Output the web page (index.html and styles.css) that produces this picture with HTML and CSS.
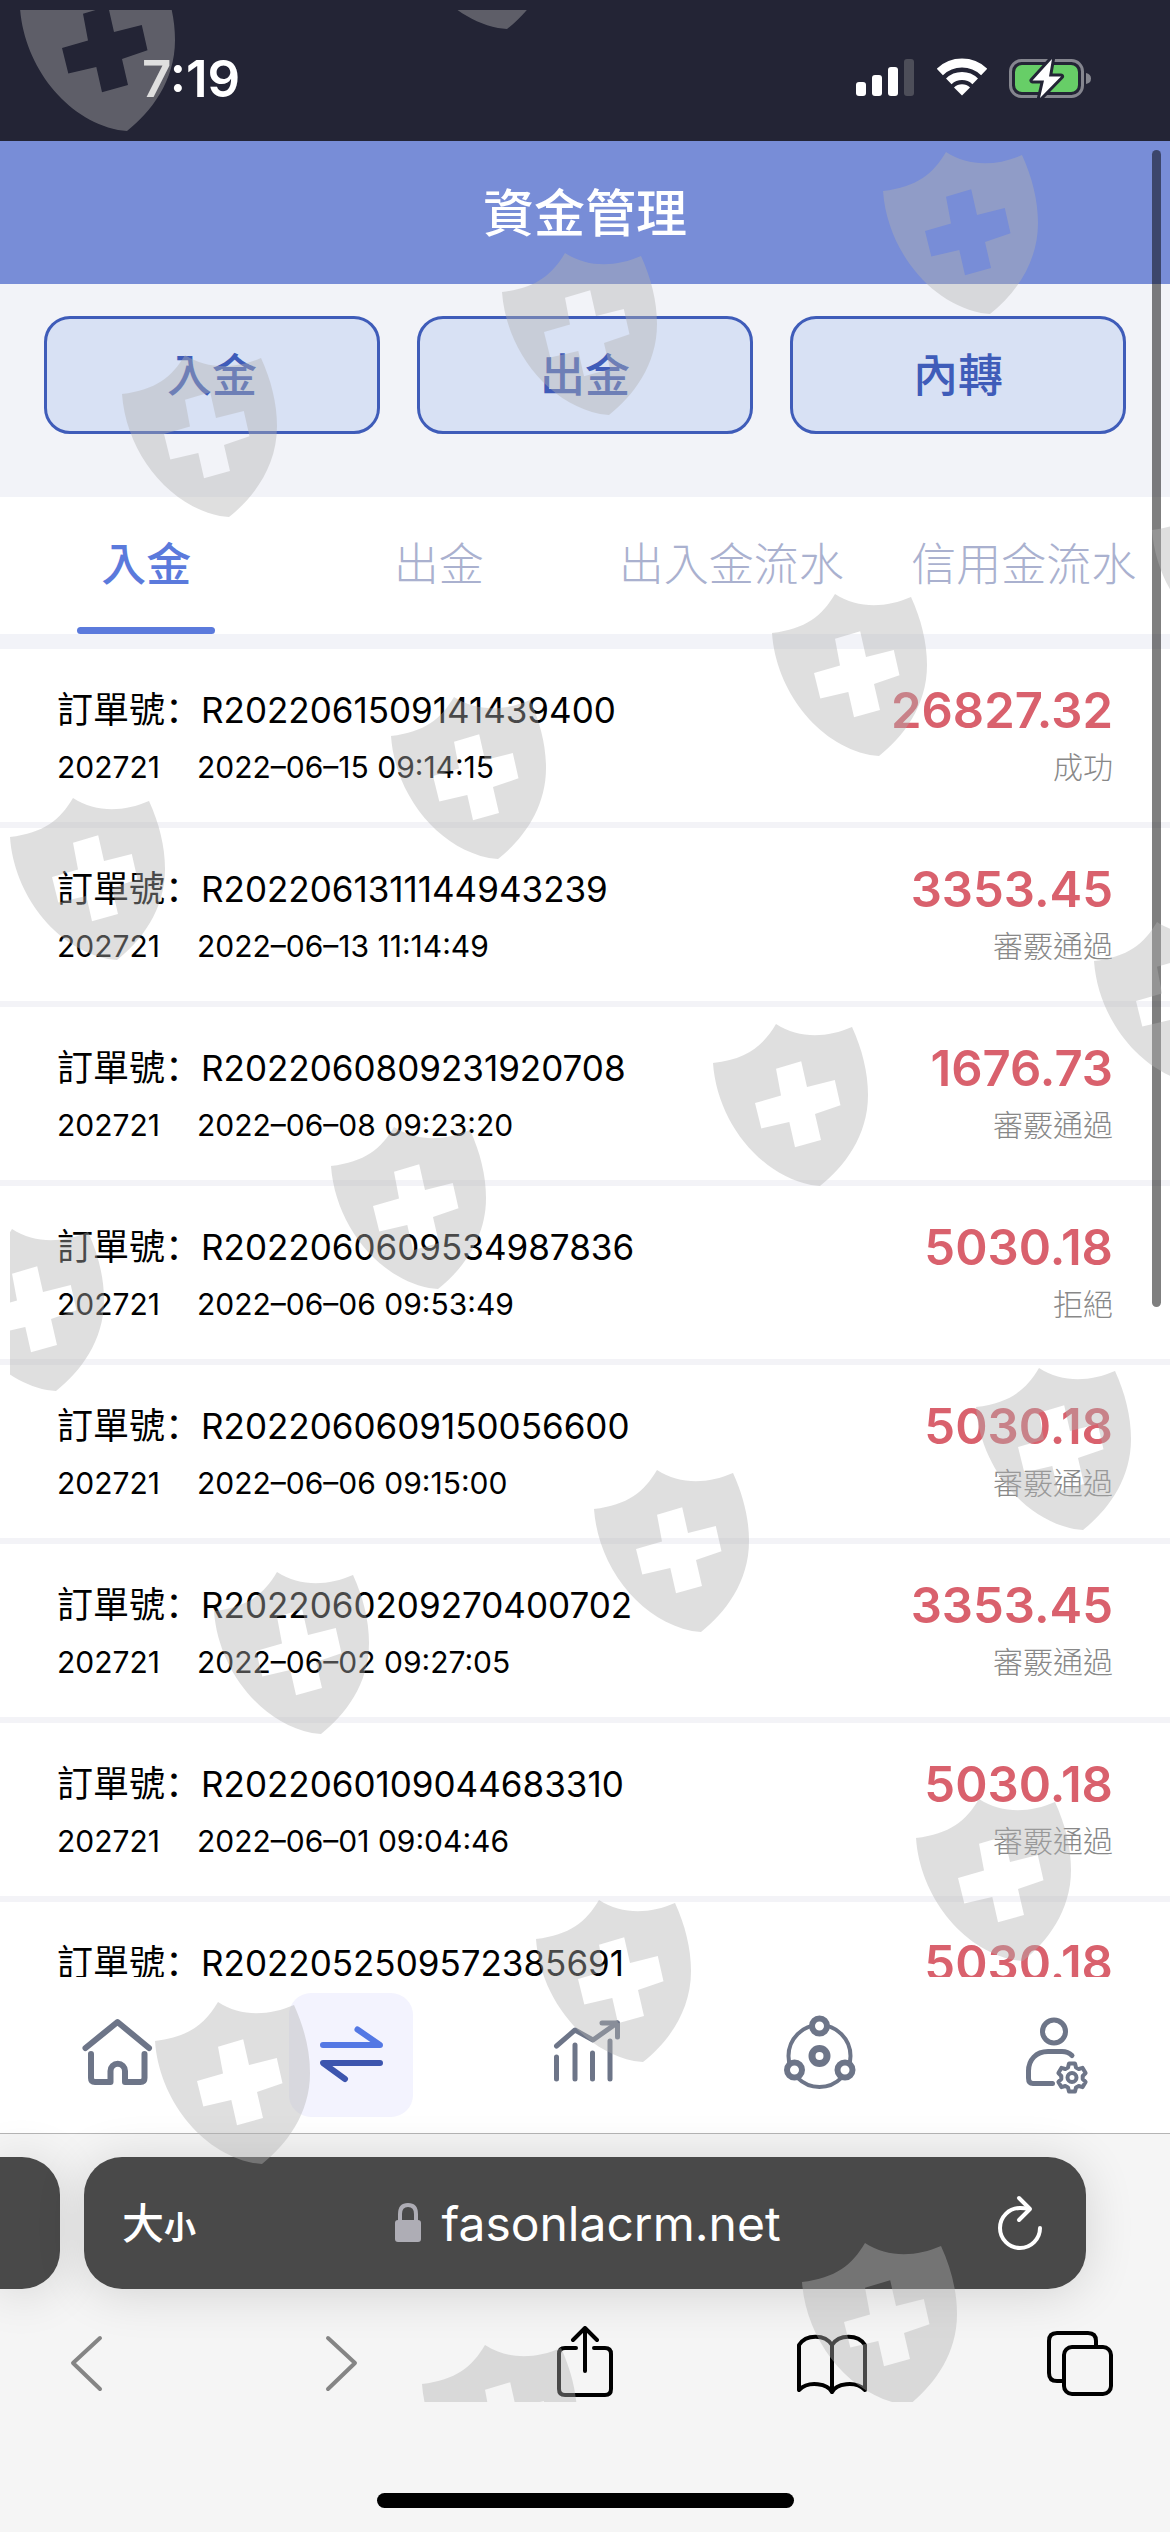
FILE: index.html
```
<!DOCTYPE html>
<html lang="zh-Hant">
    <head>
        <meta charset="utf-8">
        <meta name="viewport" content="width=device-width, initial-scale=1">
        <title>資金管理</title>

        <link rel="stylesheet" href="styles.css">
    </head>
    <body>
        <div class="status-bar">
            <span class="time">7:19</span>
            <div class="status-icons">
                <svg width="59" height="38" viewBox="0 0 59 38" fill="#fff">
                    <rect x="0" y="24" width="10" height="14" rx="3"/>
                    <rect x="16" y="17" width="10" height="21" rx="3"/>
                    <rect x="32" y="9" width="10" height="29" rx="3"/>
                    <rect x="48" y="1" width="10" height="37" rx="3" fill="#4d4e59"/>
                </svg>
                <svg width="50" height="38" viewBox="0 0 50 38" fill="none" stroke="#fff">
                    <path d="M2.8 14A32 32 0 0 1 47.2 14" stroke-width="9"/>
                    <path d="M11.8 23.3A19 19 0 0 1 38.2 23.3" stroke-width="8"/>
                    <path d="M25 37.500L17 29.500A11.500 11.500 0 0 1 33 29.500Z" fill="#fff" stroke="none"/>
                </svg>
                <svg width="82" height="40" viewBox="0 0 82 40">
                    <rect x="1.500" y="2.500" width="72" height="36" rx="11" fill="none" stroke="#85868f" stroke-width="3"/>
                    <path d="M77 15Q82 16 82 20.500Q82 25 77 26Z" fill="#85868f"/>
                    <rect x="6" y="7" width="63" height="27" rx="7" fill="#67ce67"/>
                    <path d="M43 1L23.500 22.500H35L31 40L52 18.500H40Z" fill="#fff" stroke="#232435" stroke-width="6" stroke-linejoin="round" paint-order="stroke"/>
                </svg>
            </div>
        </div>

        <div class="header">
            <h1>資金管理</h1>
        </div>

        <div class="actions">
            <button>入金</button>
            <button>出金</button>
            <button>內轉</button>
        </div>

        <div class="tabs">
            <a class="active" href="#">入金</a>
            <a href="#">出金</a>
            <a href="#">出入金流水</a>
            <a href="#">信用金流水</a>
        </div>

        <ul class="orders">
            <li>
                <div class="info">
                    <p class="number"><span lang="zh-Hans">訂單號：</span>R2022061509141439400</p>
                    <p class="meta"><span>202721</span>2022–06–15 09:14:15</p>
                </div>
                <div class="result">
                    <p class="amount">26827.32</p>
                    <p class="state">成功</p>
                </div>
            </li>
            <li>
                <div class="info">
                    <p class="number"><span lang="zh-Hans">訂單號：</span>R2022061311144943239</p>
                    <p class="meta"><span>202721</span>2022–06–13 11:14:49</p>
                </div>
                <div class="result">
                    <p class="amount">3353.45</p>
                    <p class="state">審覈通過</p>
                </div>
            </li>
            <li>
                <div class="info">
                    <p class="number"><span lang="zh-Hans">訂單號：</span>R2022060809231920708</p>
                    <p class="meta"><span>202721</span>2022–06–08 09:23:20</p>
                </div>
                <div class="result">
                    <p class="amount">1676.73</p>
                    <p class="state">審覈通過</p>
                </div>
            </li>
            <li>
                <div class="info">
                    <p class="number"><span lang="zh-Hans">訂單號：</span>R2022060609534987836</p>
                    <p class="meta"><span>202721</span>2022–06–06 09:53:49</p>
                </div>
                <div class="result">
                    <p class="amount">5030.18</p>
                    <p class="state">拒絕</p>
                </div>
            </li>
            <li>
                <div class="info">
                    <p class="number"><span lang="zh-Hans">訂單號：</span>R2022060609150056600</p>
                    <p class="meta"><span>202721</span>2022–06–06 09:15:00</p>
                </div>
                <div class="result">
                    <p class="amount">5030.18</p>
                    <p class="state">審覈通過</p>
                </div>
            </li>
            <li>
                <div class="info">
                    <p class="number"><span lang="zh-Hans">訂單號：</span>R2022060209270400702</p>
                    <p class="meta"><span>202721</span>2022–06–02 09:27:05</p>
                </div>
                <div class="result">
                    <p class="amount">3353.45</p>
                    <p class="state">審覈通過</p>
                </div>
            </li>
            <li>
                <div class="info">
                    <p class="number"><span lang="zh-Hans">訂單號：</span>R2022060109044683310</p>
                    <p class="meta"><span>202721</span>2022–06–01 09:04:46</p>
                </div>
                <div class="result">
                    <p class="amount">5030.18</p>
                    <p class="state">審覈通過</p>
                </div>
            </li>
            <li>
                <div class="info">
                    <p class="number"><span lang="zh-Hans">訂單號：</span>R2022052509572385691</p>
                </div>
                <div class="result">
                    <p class="amount">5030.18</p>
                </div>
            </li>
        </ul>

        <nav class="tab-bar">
            <a href="#" aria-label="首頁">
                <svg viewBox="0 0 80 80" stroke-width="6">
                    <path d="M8.500 33L40.500 7L72 33"/>
                    <path d="M14 39V63Q14 67 18 67H33.500V56A7 7 0 0 1 48 56V67H63.500Q67.500 67 67.500 63V39"/>
                </svg>
            </a>
            <a class="active" href="#" aria-label="資金">
                <svg viewBox="0 0 80 80" stroke-width="6">
                    <path d="M12 30H69L46.500 14.500" stroke="#5478e4"/>
                    <path d="M69 48H12L34 64" stroke="#3d55ae"/>
                </svg>
            </a>
            <a href="#" aria-label="報表">
                <svg viewBox="0 0 80 80" stroke-width="5">
                    <path d="M11.500 31L30 15L48 25L72 8"/>
                    <path d="M57 8H72.500V22"/>
                    <path d="M11.500 42V64M30 30V64M47.500 38V64M65 26V64"/>
                </svg>
            </a>
            <a href="#" aria-label="夥伴">
                <svg viewBox="0 0 80 80" stroke-width="6">
                    <circle cx="40.500" cy="41" r="31" stroke-width="4"/>
                    <g fill="#fff">
                        <circle cx="40.500" cy="11" r="7.500"/>
                        <circle cx="15.500" cy="55" r="7.500"/>
                        <circle cx="66" cy="55" r="7.500"/>
                        <circle cx="40.500" cy="41" r="7.500" stroke-width="7"/>
                    </g>
                </svg>
            </a>
            <a href="#" aria-label="帳戶">
                <svg viewBox="0 0 80 80" stroke-width="5">
                    <circle cx="41" cy="16.500" r="11.500"/>
                    <path d="M59 40.500Q55 36.500 49 36.500H35C23 36.500 15.500 45 15.500 56V63Q15.500 68.500 20 68.500H39.500"/>
                    <g transform="translate(59 62.500)" stroke-width="4">
                        <path d="M-4 -10L-3 -14H3L4 -10L6.700 -8.500L10.600 -9.600L13.600 -4.400L10.700 -1.500V1.500L13.600 4.400L10.600 9.600L6.700 8.500L4 10L3 14H-3L-4 10L-6.700 8.500L-10.600 9.600L-13.600 4.400L-10.700 1.500V-1.500L-13.600 -4.400L-10.600 -9.600L-6.700 -8.500Z"/>
                        <circle r="4.500"/>
                    </g>
                </svg>
            </a>
        </nav>

        <div class="browser">
            <div class="address-row">
                <div class="prev-page"></div>
                <div class="address">
                    <button class="text-size">大<small>小</small></button>
                    <a class="url" href="#">
                        <svg width="26" height="40" viewBox="0 0 26 40">
                            <path d="M5 19V11Q5 2 13 2Q21 2 21 11V19" fill="none" stroke="#aeadb5" stroke-width="4"/>
                            <rect y="17" width="26" height="22" rx="3" fill="#aeadb5"/>
                        </svg>
                        fasonlacrm.net
                    </a>
                    <button class="reload" aria-label="重新載入">
                        <svg width="44" height="56" viewBox="0 0 44 56" fill="none" stroke="#fff" stroke-width="4" stroke-linecap="round" stroke-linejoin="round">
                            <path d="M42 33A20 20 0 1 1 22 13Q27 13 31 14"/>
                            <path d="M21 3L32 14L21 25"/>
                        </svg>
                    </button>
                </div>
            </div>
            <div class="toolbar">
                <button aria-label="上一頁">
                    <svg viewBox="0 0 72 72"><path d="M48 12L21 37L48 63"/></svg>
                </button>
                <button aria-label="下一頁">
                    <svg viewBox="0 0 72 72"><path d="M28 12L55 37L28 63"/></svg>
                </button>
                <button aria-label="分享">
                    <svg viewBox="0 0 72 72">
                        <path d="M28 22H17Q11 22 11 28V63Q11 69 17 69H57Q63 69 63 63V28Q63 22 57 22H46"/>
                        <path d="M37 45V3M25 14L37 2L49 14"/>
                    </svg>
                </button>
                <button aria-label="書籤">
                    <svg viewBox="0 0 72 72">
                        <path d="M36 66C32 58 13 54 3 64V19C10 8 29 8 36 19C43 8 62 8 69 19V64C59 54 40 58 36 66V19"/>
                    </svg>
                </button>
                <button aria-label="分頁">
                    <svg viewBox="0 0 72 72">
                        <path d="M19 55H13Q5 55 5 47V15Q5 7 13 7H44Q52 7 52 15V20"/>
                        <rect x="20" y="21" width="47" height="47" rx="8"/>
                    </svg>
                </button>
            </div>
            <div class="home-indicator"></div>
        </div>

        <div class="scroll-thumb"></div>

        <!-- watermark -->
        <svg class="watermark" viewBox="0 0 1170 2532" aria-hidden="true">
            <defs>
                <path id="shield" fill-rule="evenodd" d="M0 39C34 35 50 22 63 0C86 15 114 14 139 3C149 25 155 48 155 71C155 112 131 143 107 162L98 161C45 150 4 96 0 39ZM63 44.700L88.200 37.300L94 63L121.800 56L127.500 81.300L102 90L108 116L82 123.300L76.300 98L48.300 104.500L42 79L68 71.500Z"/>
                <clipPath id="area"><rect x="10" y="10" width="1160" height="2392"/></clipPath>
            </defs>
            <g clip-path="url(#area)">
                <use href="#shield" x="20" y="-31"/>
                <use href="#shield" x="400" y="-133"/>
                <use href="#shield" x="883" y="152"/>
                <use href="#shield" x="502" y="253"/>
                <use href="#shield" x="122" y="355"/>
                <use href="#shield" x="1152" y="491"/>
                <use href="#shield" x="772" y="594"/>
                <use href="#shield" x="391" y="697"/>
                <use href="#shield" x="10" y="798"/>
                <use href="#shield" x="1094" y="922"/>
                <use href="#shield" x="713" y="1024"/>
                <use href="#shield" x="331" y="1127"/>
                <use href="#shield" x="-51" y="1229"/>
                <use href="#shield" x="976" y="1368"/>
                <use href="#shield" x="594" y="1470"/>
                <use href="#shield" x="214" y="1572"/>
                <use href="#shield" x="916" y="1799"/>
                <use href="#shield" x="536" y="1900"/>
                <use href="#shield" x="155" y="2002"/>
                <use href="#shield" x="802" y="2243"/>
                <use href="#shield" x="422" y="2345"/>
            </g>
        </svg>
    </body>
</html>
```
FILE: styles.css
```
* {
    box-sizing: border-box;
}

body {
    position: relative;
    display: flex;
    flex-direction: column;
    height: 100vh;
    margin: 0;
    overflow: hidden;
    font-family: Inter, "Noto Sans CJK TC", sans-serif;
    background-color: #f2f3f8;
}

h1, p, ul {
    margin: 0;
    padding: 0;
}

a {
    color: inherit;
    text-decoration: none;
}

button {
    padding: 0;
    border: 0;
    background: none;
    font-family: inherit;
}

svg {
    display: block;
}

.status-bar {
    display: flex;
    justify-content: space-between;
    align-items: center;
    height: 141px;
    padding: 15px 79px 0 142px;
    color: #fff;
    background-color: #232435;
}

.time {
    font-size: 51px;
    font-weight: 600;
}

.status-icons {
    display: flex;
    gap: 22px;
}

.header {
    padding: 36px 0 33px;
    text-align: center;
    color: #fff;
    background-color: #788dd7;
}

.header h1 {
    font-size: 51px;
    font-weight: 500;
    line-height: 74px;
}

.actions {
    display: grid;
    grid-template-columns: repeat(3, 1fr);
    gap: 37px;
    padding: 32px 44px 63px;
}

.actions button {
    height: 118px;
    padding-bottom: 6px;
    border: 3px solid #3f5cb9;
    border-radius: 26px;
    color: #3f5cb9;
    background-color: #d8e1f4;
    font-size: 45px;
    font-weight: 500;
}

.tabs {
    display: grid;
    grid-template-columns: repeat(4, 1fr);
    margin-bottom: 15px;
    background-color: #fff;
}

.tabs a {
    display: flex;
    flex-direction: column;
    align-items: center;
    height: 137px;
    padding-top: 36px;
    color: #aab1cf;
    font-size: 45px;
    font-weight: 300;
    line-height: 64px;
    white-space: nowrap;
}

.tabs .active {
    color: #5b7adc;
    font-weight: 500;
}

.tabs .active::after {
    content: "";
    width: 138px;
    height: 7px;
    margin-top: auto;
    border-radius: 4px;
    background-color: #5b7adc;
}

.orders {
    flex: 1;
    min-height: 0;
    overflow: hidden;
    list-style: none;
    background-color: #fff;
}

.orders li {
    display: flex;
    justify-content: space-between;
    height: 179px;
    padding: 31px 57px 0;
    border-bottom: 6px solid #f3f3f7;
    line-height: 58px;
    white-space: nowrap;
}

.number {
    height: 58px;
    font-size: 35px;
    line-height: 54px;
}

.number span {
    font-family: "Noto Sans CJK SC", sans-serif;
    font-size: 36px;
}

.meta {
    font-size: 30px;
}

.meta span {
    display: inline-block;
    width: 140px;
}

.result {
    text-align: right;
}

.amount {
    height: 58px;
    color: #d9616d;
    font-size: 49px;
    font-weight: 600;
    line-height: 62px;
}

.state {
    color: #888;
    font-size: 30px;
    font-weight: 300;
}

.tab-bar {
    display: grid;
    grid-template-columns: repeat(5, 1fr);
    justify-items: center;
    padding: 16px 0;
    background-color: #fff;
}

.tab-bar a {
    padding: 22px;
    border-radius: 22px;
}

.tab-bar .active {
    background-color: #f3f3fe;
}

.tab-bar svg {
    width: 80px;
    height: 80px;
    fill: none;
    stroke: #6d7588;
    stroke-linecap: round;
    stroke-linejoin: round;
}

.browser {
    padding-bottom: 24px;
    border-top: 1px solid #b5b5b5;
    background-color: #f5f5f5;
}

.address-row {
    display: flex;
    gap: 24px;
    padding: 23px 84px 37px 0;
}

.prev-page,
.address {
    height: 132px;
    background-color: #494949;
    box-shadow: 0 4px 50px rgba(0, 0, 0, .14);
}

.prev-page {
    width: 60px;
    border-radius: 0 38px 38px 0;
}

.address {
    display: grid;
    grid-template-columns: 1fr auto 1fr;
    align-items: center;
    flex: 1;
    padding: 0 44px 0 38px;
    border-radius: 38px;
    color: #fff;
}

.text-size {
    justify-self: start;
    padding-bottom: 6px;
    color: #fff;
    font-size: 42px;
    font-weight: 500;
}

.text-size small {
    font-size: 32px;
    font-weight: 700;
}

.url {
    display: flex;
    align-items: center;
    gap: 20px;
    padding-left: 12px;
    font-size: 48px;
}

.reload {
    justify-self: end;
}

.toolbar {
    display: flex;
    justify-content: space-between;
    padding: 0 54px 0 52px;
}

.toolbar svg {
    width: 72px;
    height: 72px;
    fill: none;
    stroke: #000;
    stroke-width: 4;
    stroke-linecap: round;
    stroke-linejoin: round;
}

.toolbar button:nth-child(-n+2) svg {
    stroke: #858585;
}

.home-indicator {
    width: 417px;
    height: 15px;
    margin: 95px auto 0;
    border-radius: 8px;
    background-color: #000;
}

.scroll-thumb {
    position: absolute;
    top: 150px;
    right: 9px;
    width: 9px;
    height: 1157px;
    border-radius: 5px;
    background-color: rgba(0, 0, 0, .5);
}

.watermark {
    position: absolute;
    top: 0;
    left: 0;
    width: 100%;
    fill: #b2b2b2;
    opacity: .41;
    pointer-events: none;
}
```
